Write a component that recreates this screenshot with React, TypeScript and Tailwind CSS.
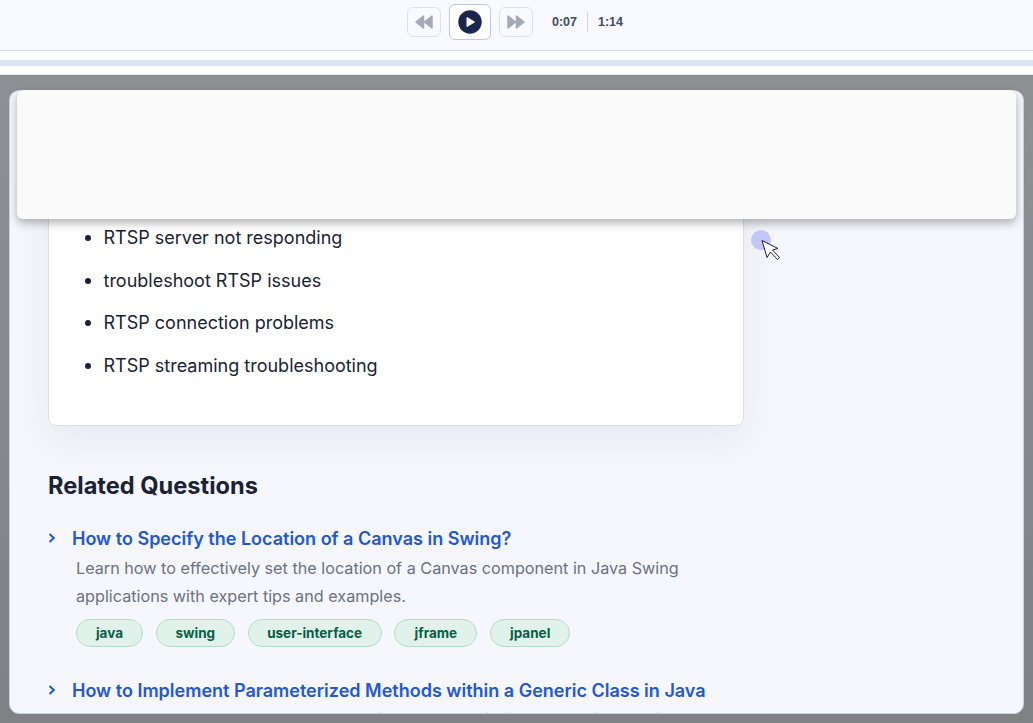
import React from "react";

const items = ["RTSP server not responding", "troubleshoot RTSP issues", "RTSP connection problems", "RTSP streaming troubleshooting"];
const tags = [["java", 67], ["swing", 79], ["user-interface", 134], ["jframe", 83], ["jpanel", 80]] as const;

function Chevron() {
  return (
    <svg width="8" height="12" viewBox="0 0 8 12" className="shrink-0" fill="none" stroke="#2157d8" strokeWidth="2">
      <path d="M1.5 2 L5.8 6 L1.5 10" />
    </svg>
  );
}

export default function App() {
  return (
    <div className="relative w-[1033px] h-[723px] overflow-hidden bg-white font-['Inter',sans-serif]">
      <div className="h-[51px] bg-[#f8faff] border-b border-[#d5deeb] flex items-center justify-center pb-[6px]">
        <div className="flex items-center mr-[2px]">
          <button className="-ml-[1px] w-[34px] h-[30px] rounded-[6px] border border-[#dbe3f0] flex items-center justify-center">
            <svg width="20" height="16" viewBox="0 0 20 16" fill="#a5a9b8" stroke="#a5a9b8" strokeWidth="1.5" strokeLinejoin="round"><path d="M9.5 2 L2 8 L9.5 14 Z M18 2 L10.5 8 L18 14 Z" /></svg>
          </button>
          <button className="ml-[8px] w-[42px] h-[36px] rounded-[6px] border border-[#bcc9e2] bg-white flex items-center justify-center">
            <svg width="24" height="24" viewBox="0 0 24 24"><circle cx="12" cy="12" r="11.7" fill="#19264f" /><path d="M9 7.5 L16.5 12 L9 16.5 Z" fill="#fff" stroke="#fff" strokeWidth="1" strokeLinejoin="round" /></svg>
          </button>
          <button className="ml-[8px] w-[34px] h-[30px] rounded-[6px] border border-[#dbe3f0] flex items-center justify-center">
            <svg width="20" height="16" viewBox="0 0 20 16" fill="#a5a9b8" stroke="#a5a9b8" strokeWidth="1.5" strokeLinejoin="round"><path d="M2 2 L9.5 8 L2 14 Z M10.5 2 L18 8 L10.5 14 Z" /></svg>
          </button>
          <span className="ml-[19px] text-[12.5px] font-bold text-[#3f4a66] font-['Liberation_Sans',sans-serif] leading-none">0:07</span>
          <span className="ml-[10px] h-[20px] w-px bg-[#cdd6e6]" />
          <span className="ml-[10px] text-[12.5px] font-bold text-[#3f4a66] font-['Liberation_Sans',sans-serif] leading-none">1:14</span>
        </div>
      </div>
      <div className="h-[9px] bg-white" />
      <div className="h-[6px] bg-[#dbe5f1]" />
      <div className="h-[9px] bg-white border-b border-[#dfe5ee]" />
      <div className="h-[648px] bg-gradient-to-b from-[#8e9093] to-[#7f8185] px-[9px] pt-[15px]">
        <div className="h-[624px] rounded-[10px] border border-[#c5d3ea] bg-[#f6f7fc] overflow-hidden px-[38px]">
          <div className="h-[335px] w-[696px] rounded-b-[8px] bg-white border border-[#d9dfe9] shadow-[0_12px_40px_rgba(30,40,80,0.07)] flex flex-col justify-end pb-[46px]">
            <ul className="list-disc pl-[54.5px] text-[18px] text-[#1a2233] flex flex-col gap-[15.6px] marker:text-[20px]">
              {items.map((t) => <li key={t} className="h-[27px] leading-[27px]">{t}</li>)}
            </ul>
          </div>
          <h2 className="mt-[44px] text-[23.6px] leading-[32px] font-bold text-[#1a2238]">Related Questions</h2>
          <div className="mt-[22px] flex items-center gap-[16px] h-[28px]">
            <Chevron />
            <span className="text-[18px] font-semibold text-[#2157d8]">How to Specify the Location of a Canvas in Swing?</span>
          </div>
          <p className="mt-[2px] ml-[28px] w-[640px] text-[16.2px] leading-[28px] text-[#6b7280]">Learn how to effectively set the location of a Canvas component in Java Swing applications with expert tips and examples.</p>
          <div className="mt-[9px] ml-[28px] flex gap-[12.8px]">
            {tags.map(([t, w]) => (
              <span key={t} style={{ width: w }} className="h-[28px] rounded-full bg-[#e0f2ea] border border-[#b5dccb] flex items-center justify-center text-[13.5px] font-bold text-[#065f46]">{t}</span>
            ))}
          </div>
          <div className="mt-[29px] flex items-center gap-[16px] h-[28px]">
            <Chevron />
            <span className="text-[18px] font-semibold text-[#2157d8]">How to Implement Parameterized Methods within a Generic Class in Java</span>
          </div>
          <p className="mt-[1px] ml-[28px] w-[640px] text-[16.2px] leading-[28px] text-[#6b7280]">Learn how to create and use parameterized methods inside a generic class in Java with clear examples.</p>
        </div>
      </div>
      <div className="absolute left-[16.5px] top-[90px] w-[999px] h-[129px] rounded-[6px] bg-[#fafafa] shadow-[0_4px_10px_rgba(0,0,0,0.3)]" />
      <div className="absolute left-[751px] top-[230px] w-[20px] h-[20px] rounded-full bg-[#c2c6f8]" />
      <svg className="absolute left-[760px] top-[239px]" width="21" height="22" viewBox="0 0 21 22" fill="#fff" stroke="#222" strokeWidth="1"><path d="M2 1.5 L18 9.5 L12.5 11 L19.5 18.5 L17.5 20.5 L10.5 13 L7 18.5 Z" /></svg>
    </div>
  );
}
